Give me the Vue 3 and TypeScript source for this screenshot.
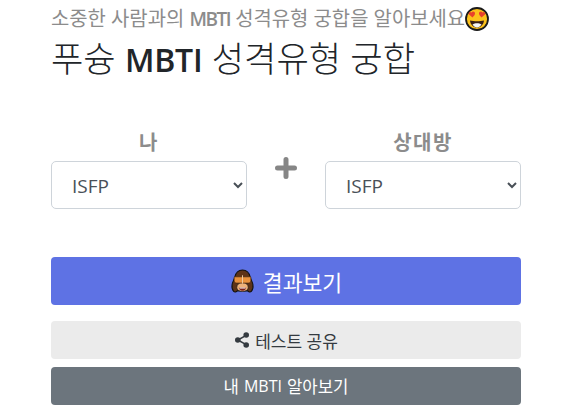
<script setup lang="ts">
const options: string[] = ['ISFP', 'ISTP', 'INFP', 'INTP', 'ESFP', 'ESTP', 'ENFP', 'ENTP'];
</script>

<template>
  <main class="page">
    <p class="subtitle">
      <span>소중한 사람과의 <b class="tight">MBTI</b> 성격유형 궁합을 알아보세요</span>
      <svg class="love" viewBox="0 0 24 24" aria-hidden="true">
        <circle cx="12" cy="12" r="11" fill="#fcc21b" stroke="#1a1a1a" stroke-width="1.800" />
        <path d="M5 13.500c4 1 10 1 14 0-.4 4.300-3.400 7-7 7s-6.600-2.700-7-7z" fill="#3a1f14" />
        <path d="M7.500 17.500c2.500-1.600 6.500-1.600 9 0-1.200 2-2.900 3-4.500 3s-3.300-1-4.500-3z" fill="#f6f6f6" />
        <path d="M7.500 10.500 4 7.500C3 6 4.800 4 6.500 5.500 7.500 3.800 10.300 4.600 10 6.800c-.2 1.300-1.400 2.500-2.500 3.700z" fill="#e8412c" />
        <path d="M16.500 10.500 20 7.500C21 6 19.200 4 17.500 5.500 16.500 3.800 13.700 4.600 14 6.800c.2 1.300 1.400 2.500 2.500 3.700z" fill="#e8412c" />
      </svg>
    </p>
    <h1 class="title">푸슝 <b class="mbti">MBTI</b> 성격유형 궁합</h1>

    <section class="pickers">
      <div class="picker">
        <label class="label" for="me">나</label>
        <select id="me" class="select">
          <option v-for="o in options" :key="o">{{ o }}</option>
        </select>
      </div>
      <svg class="plus" viewBox="0 0 22 22" aria-hidden="true">
        <path d="M11 2.500v17M2.500 11h17" stroke="#868686" stroke-width="5" stroke-linecap="round" />
      </svg>
      <div class="picker">
        <label class="label" for="other">상대방</label>
        <select id="other" class="select">
          <option v-for="o in options" :key="o">{{ o }}</option>
        </select>
      </div>
    </section>

    <button class="btn result" type="button">
      <svg class="monkey" viewBox="0 0 24 24" aria-hidden="true">
        <path d="M12 1c3.500 0 6.500 2.500 7.500 7 .4 2 2 4 2.500 7 .4 2.500-.2 5-1.500 6.500-1 1-2.800.5-3.500-.5H7c-.7 1-2.500 1.500-3.500.5C2.200 20 1.600 17.500 2 15c.5-3 2.100-5 2.500-7C5.500 3.500 8.500 1 12 1z" fill="#5d3317" stroke="#111" stroke-width="1" />
        <path d="M12 13c3.300 0 5.500 2 5.500 4.800 0 2.300-2.400 3.700-5.500 3.700s-5.500-1.400-5.500-3.700C6.500 15 8.700 13 12 13z" fill="#eeb27a" stroke="#111" stroke-width=".6" />
        <path d="M12 20.800c-2 0-3.300-1.200-3.600-3h7.200c-.3 1.800-1.600 3-3.600 3z" fill="#7a2018" />
        <path d="M8.800 17.800h6.400l-.4 1H9.200z" fill="#fff" />
        <path d="M4.500 7.500h7c.3 0 .5.200.5.500v5.500H6.500C5 13.500 4 12.500 4 11V8c0-.3.200-.5.500-.5z" fill="#e8923e" stroke="#3a1f0e" stroke-width=".6" />
        <path d="M19.500 7.500h-7c-.3 0-.5.200-.5.500v5.500h5.500c1.500 0 2.500-1 2.500-2.500V8c0-.3-.2-.5-.5-.5z" fill="#e8923e" stroke="#3a1f0e" stroke-width=".6" />
        <path d="M12 6v8" stroke="#f6d2a8" stroke-width=".9" />
      </svg>
      <span>결과보기</span>
    </button>
    <button class="btn share" type="button">
      <svg class="share-icon" viewBox="0 0 16 16" aria-hidden="true">
        <path d="M12.200 3.400 3.800 8l8.400 4.600" fill="none" stroke="#343a40" stroke-width="1.600" />
        <circle cx="12.200" cy="3" r="2.800" fill="#343a40" />
        <circle cx="3.800" cy="8" r="2.800" fill="#343a40" />
        <circle cx="12.200" cy="13" r="2.800" fill="#343a40" />
      </svg>
      <span>테스트 공유</span>
    </button>
    <button class="btn mine" type="button">내 <span class="mine-latin">MBTI</span> 알아보기</button>
  </main>
</template>

<style>
html,
body {
  margin: 0;
  background: #fff;
  overflow: hidden;
}
</style>

<style scoped>
.page {
  box-sizing: border-box;
  width: 470px;
  margin: 0 0 0 51px;
  padding-top: 7px;
  font-family: "Open Sans", "Noto Sans CJK KR", sans-serif;
  color: #343a40;
}
.subtitle {
  display: flex;
  align-items: center;
  height: 24px;
  margin: 0;
  font-size: 19.900px;
  line-height: 24px;
  color: #8c8c8c;
  white-space: nowrap;
}
.tight {
  font-size: 19px;
  font-weight: 600;
  letter-spacing: -1.500px;
}
.love {
  width: 24px;
  height: 24px;
  flex: none;
}
.title {
  height: 48px;
  margin: 0;
  padding-top: 3px;
  font-size: 35.200px;
  line-height: 48px;
  font-weight: 300;
  color: #212529;
  white-space: nowrap;
}
.mbti {
  font-size: 32px;
  font-weight: 600;
  letter-spacing: -0.200px;
}
.pickers {
  display: grid;
  grid-template-columns: 196px 1fr 196px;
  align-items: start;
  margin-top: 44px;
}
.picker {
  display: flex;
  flex-direction: column;
}
.label {
  height: 35px;
  font-size: 20px;
  line-height: 33px;
  letter-spacing: 1.500px;
  font-weight: 700;
  text-align: center;
  color: #8c8c8c;
}
.select {
  box-sizing: border-box;
  width: 196px;
  height: 48px;
  padding: 2px 0 0 16px;
  border: 1px solid #ced4da;
  border-radius: 5px;
  background: #fff;
  font-family: inherit;
  font-size: 19px;
  color: #495057;
}
.plus {
  justify-self: center;
  width: 22px;
  height: 22px;
  margin-top: 31px;
}
.btn {
  display: flex;
  align-items: center;
  justify-content: center;
  box-sizing: border-box;
  width: 100%;
  border: 0;
  border-radius: 4px;
  font-family: inherit;
}
.result {
  gap: 8px;
  height: 48px;
  margin-top: 48px;
  background: #5e72e4;
  color: #fff;
  font-size: 21.600px;
}
.monkey {
  width: 25px;
  height: 25px;
}
.share {
  gap: 5px;
  height: 38px;
  margin-top: 16px;
  background: #ebebeb;
  color: #343a40;
  font-size: 17px;
}
.share-icon {
  width: 16px;
  height: 16px;
}
.mine {
  gap: 0.300em;
  height: 38px;
  margin-top: 8px;
  background: #6c757d;
  color: #fff;
  font-size: 16.700px;
}
.mine-latin {
  font-size: 16px;
}
</style>
